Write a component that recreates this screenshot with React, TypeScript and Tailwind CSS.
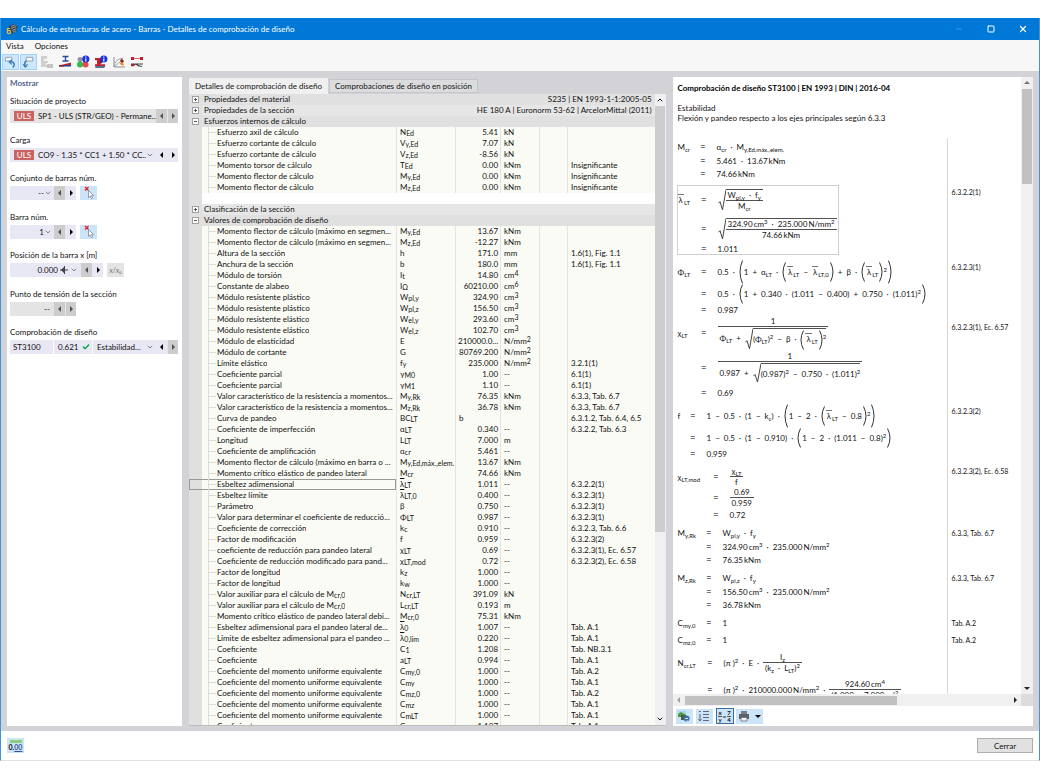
import React from 'react';
import { ChevronDown, ChevronUp, Check, X, Minus, Square } from 'lucide-react';

/* ---------- shared text helpers ---------- */

/** Renders "M|y,Ed" as M with subscript, "cm^4" as superscript; a leading "~" draws a bar over the letter. */
function Sym({ t }: { t: string }) {
  const bar = t.startsWith('~');
  const clean = bar ? t.slice(1) : t;
  const [base, sub] = clean.split('|');
  const [main, sup] = base.split('^');
  return (
    <span className="whitespace-nowrap">
      <span className={bar ? 'overline' : ''}>{main}</span>
      {sup && <span className="relative -top-0.5 text-[7px] leading-none">{sup}</span>}
      {sub && <span className="relative top-px text-[7px] leading-none">{sub}</span>}
    </span>
  );
}

function Triangle({ dir, className = '' }: { dir: 'l' | 'r' | 'd' | 'u'; className?: string }) {
  const d = {
    l: 'M5 1 L2 4 L5 7 Z',
    r: 'M3 1 L6 4 L3 7 Z',
    d: 'M1 3 L7 3 L4 6 Z',
    u: 'M1 5 L7 5 L4 2 Z',
  }[dir];
  return (
    <svg viewBox="0 0 8 8" className={`h-2 w-2 shrink-0 ${className}`} fill="currentColor">
      <path d={d} />
    </svg>
  );
}

/* ---------- toolbar icons ---------- */

const ToolIcons = [
  <svg key="a" viewBox="0 0 16 14" className="h-3.5 w-4" fill="none">
    <path d="M2.500 2h7v4h-7z" fill="#f4f6f8" stroke="#98a0a8" />
    <path d="M7 7q4-1 5 2 0 2-1.500 4" stroke="#3d78b4" strokeWidth="1.600" />
    <path d="M9.500 4.500L6.500 7l3 2.500" stroke="#3d78b4" strokeWidth="1.200" />
  </svg>,
  <svg key="b" viewBox="0 0 16 14" className="h-3.5 w-4" fill="none">
    <path d="M5.500 2h7v4h-7z" fill="#f4f6f8" stroke="#98a0a8" />
    <path d="M6 6Q3 7 4.500 12" stroke="#3d78b4" strokeWidth="1.600" />
    <path d="M2 9.500L4.800 12.500 7 9.500" stroke="#3d78b4" strokeWidth="1.200" />
  </svg>,
  <svg key="c" viewBox="0 0 16 14" className="h-3.5 w-4" fill="#d0d0d0">
    <path d="M2 1h6v3H5v2h4v2H7v2h2v2H2z" />
    <path d="M8 9h6v4H8z" fill="#c4c4c4" />
  </svg>,
  <svg key="d" viewBox="0 0 16 14" className="h-3.5 w-4">
    <path d="M5.500 1.500h6M5.500 6h6M8.500 1v5" stroke="#2b4a9a" strokeWidth="1.400" />
    <path d="M2 10.500L14 7.500v3z" fill="#c9252c" />
    <path d="M2 10h12v1.500H2z" fill="#26408b" />
    <path d="M2 10h5v1.500H2z" fill="#8c1d2a" />
  </svg>,
  <svg key="e" viewBox="0 0 16 14" className="h-3.5 w-4">
    <circle cx="5" cy="4.500" r="2.500" fill="#8b94a6" />
    <circle cx="5" cy="9.500" r="3" fill="#2fbf45" />
    <circle cx="10.500" cy="9.500" r="3" fill="#ea4a4a" />
    <circle cx="10.800" cy="4" r="3.600" fill="#1a2fe0" />
    <path d="M10.800 1.500v1.200M10.800 3.600v3" stroke="#fff" strokeWidth="1.200" />
  </svg>,
  <svg key="f" viewBox="0 0 16 14" className="h-3.5 w-4">
    <path d="M2 3h7v2.200H7v4h5v2.300H2V9.200h2v-4H2z" fill="#c2232b" />
    <path d="M3 11h9.500l-1.500 2H2z" fill="#5a6f96" />
    <path d="M7 5v4l2-1V5z" fill="#7d1722" />
    <circle cx="10.800" cy="4" r="3.600" fill="#1a2fe0" />
    <path d="M10.800 1.500v1.200M10.800 3.600v3" stroke="#fff" strokeWidth="1.200" />
  </svg>,
  <svg key="g" viewBox="0 0 16 14" className="h-3.5 w-4" fill="none">
    <path d="M3 2v10h11" stroke="#8f8f8f" />
    <path d="M3 12Q4 4 12 3M3 12L11 5" stroke="#a3a3a3" />
    <path d="M9 5.500l2-2 2 3-2 2.500z" fill="#8a2f1c" />
    <path d="M8.500 8l3-1 1.500 3-2.500.5z" fill="#e88a2c" />
  </svg>,
  <svg key="h" viewBox="0 0 16 14" className="h-3.5 w-4" fill="none">
    <path d="M3 3.500h10" stroke="#e06a6a" />
    <path d="M2 2h3v3H2zM11 2h3v3h-3z" fill="#c01f2c" />
    <path d="M2 9h5q-2 3.500-5 2z" fill="#c01f2c" />
    <path d="M2 9h12M7 9q3 3 6 2" stroke="#444" strokeWidth="1.200" />
  </svg>,
];
const toolNames = [
  'Deshacer posición',
  'Rehacer posición',
  'Vista previa',
  'Sección',
  'Información',
  'Información de sección',
  'Diagrama',
  'Resultados en barra',
];

/* ---------- left panel ---------- */

const Field = ({ label, id, children }: { label: string; id: string; children: React.ReactNode }) => (
  <div className="flex flex-col gap-0.5">
    <label htmlFor={id} className="h-3 leading-3">
      {label}
    </label>
    <div className="flex h-[14px] items-stretch">{children}</div>
  </div>
);

function Arrow({ dir, disabled }: { dir: 'l' | 'r'; disabled?: boolean }) {
  return (
    <button
      type="button"
      disabled={disabled}
      aria-label={dir === 'l' ? 'Anterior' : 'Siguiente'}
      className={`flex w-[11px] items-center justify-center ${
        disabled ? 'bg-[#cdcdcd] text-neutral-600' : 'bg-[#e8e8f4] text-black'
      } ${dir === 'r' && disabled ? 'border-l border-neutral-200' : ''}`}
    >
      <Triangle dir={dir} />
    </button>
  );
}

function Drop({
  id,
  value,
  right,
  plain,
  disabled,
}: {
  id: string;
  value: string;
  right?: boolean;
  plain?: boolean;
  disabled?: boolean;
}) {
  return (
    <span className="relative flex min-w-0 flex-1 items-center">
      <select
        id={id}
        disabled={disabled}
        className={`h-full w-full appearance-none bg-transparent opacity-100 outline-none ${
          plain ? 'pl-1' : 'pr-2.5 pl-1'
        } ${right ? 'text-right' : ''}`}
      >
        <option>{value}</option>
      </select>
      {!plain && (
        <ChevronDown className="pointer-events-none absolute right-0.5 h-2 w-2 text-neutral-600" strokeWidth={2} />
      )}
    </span>
  );
}

const Uls = () => (
  <span className="my-0.5 ml-1 flex w-5 shrink-0 items-center justify-center bg-[#c96464] text-white">ULS</span>
);

const PickButton = () => (
  <button type="button" aria-label="Seleccionar" className="ml-1 flex w-[17px] items-center justify-center bg-[#cce4f7]">
    <svg viewBox="0 0 14 14" className="h-[14px] w-[14px]" fill="none">
      <path d="M3 1l3.500 3.500M6.500 1L3 4.500" stroke="#e0202c" strokeWidth="1.300" />
      <path d="M6.500 4.500v7l1.700-1.500 1.300 2.500 1.200-.6-1.200-2.400h2z" fill="#fff" stroke="#7d8790" strokeWidth=".8" />
    </svg>
  </button>
);

function LeftPanel() {
  return (
    <aside className="w-[175px] shrink-0 bg-white pl-[3px]">
      <h2 className="h-3 leading-3 font-bold text-[#52648f]">Mostrar</h2>
      <div className="grid h-[265px] content-between pt-1.5">
        <Field label="Situación de proyecto" id="sp">
          <div className="flex w-[146px] bg-[#e4e4e4]">
            <Uls />
            <Drop id="sp" value="SP1 - ULS (STR/GEO) - Permane..." plain disabled />
          </div>
          <Arrow dir="l" disabled />
          <Arrow dir="r" disabled />
        </Field>
        <Field label="Carga" id="carga">
          <div className="flex w-[146px] bg-[#e8e8f4]">
            <Uls />
            <Drop id="carga" value="CO9 - 1.35 * CC1 + 1.50 * CC..." />
          </div>
          <Arrow dir="l" />
          <Arrow dir="r" />
        </Field>
        <Field label="Conjunto de barras núm." id="cb">
          <div className="flex w-11 bg-[#e8e8f4]">
            <Drop id="cb" value="--" right />
          </div>
          <Arrow dir="l" disabled />
          <Arrow dir="r" />
          <PickButton />
        </Field>
        <Field label="Barra núm." id="bn">
          <div className="flex w-11 bg-[#e8e8f4]">
            <Drop id="bn" value="1" right />
          </div>
          <Arrow dir="l" disabled />
          <Arrow dir="r" />
          <PickButton />
        </Field>
        <Field label="Posición de la barra x [m]" id="px">
          <div className="flex w-[71px] items-center bg-[#e8e8f4]">
            <input id="px" defaultValue="0.000" className="h-full w-12 bg-transparent text-right outline-none" />
            <svg viewBox="0 0 8 8" className="ml-0.5 h-2 w-2 text-neutral-700">
              <path d="M0 4h8M4.500 0v8" stroke="currentColor" />
              <path d="M1 4l3-3v6z" fill="currentColor" />
            </svg>
            <ChevronDown className="ml-0.5 h-2 w-2 text-neutral-600" />
          </div>
          <Arrow dir="l" disabled />
          <Arrow dir="r" />
          <button type="button" className="ml-1 flex w-[17px] items-center justify-center bg-[#e4e4e4] text-[7px] text-neutral-500">
            x/x₀
          </button>
        </Field>
        <Field label="Punto de tensión de la sección" id="pt">
          <div className="flex w-11 bg-[#e4e4e4]">
            <input id="pt" disabled defaultValue="--" className="h-full w-full bg-transparent pr-1 text-right" />
          </div>
          <Arrow dir="l" disabled />
          <Arrow dir="r" disabled />
        </Field>
        <Field label="Comprobación de diseño" id="cd">
          <div className="flex w-[146px] items-center bg-[#e8e8f4]">
            <span className="w-[43px] pl-[3px]">ST3100</span>
            <span className="flex h-full w-10 items-center gap-1 border-x border-white pl-1">
              0.621 <Check className="h-2 w-2 text-green-600" strokeWidth={4} />
            </span>
            <Drop id="cd" value="Estabilidad..." />
          </div>
          <Arrow dir="l" />
          <Arrow dir="r" disabled />
        </Field>
      </div>
    </aside>
  );
}

/* ---------- details table ---------- */

type Row = [string, string, string, string, string];

const forces: Row[] = [
  ['Esfuerzo axil de cálculo', 'N|Ed', '5.41', 'kN', ''],
  ['Esfuerzo cortante de cálculo', 'V|y,Ed', '7.07', 'kN', ''],
  ['Esfuerzo cortante de cálculo', 'V|z,Ed', '-8.56', 'kN', ''],
  ['Momento torsor de cálculo', 'T|Ed', '0.00', 'kNm', 'Insignificante'],
  ['Momento flector de cálculo', 'M|y,Ed', '0.00', 'kNm', 'Insignificante'],
  ['Momento flector de cálculo', 'M|z,Ed', '0.00', 'kNm', 'Insignificante'],
];

const values: Row[] = [
  ['Momento flector de cálculo (máximo en segmen...', 'M|y,Ed', '13.67', 'kNm', ''],
  ['Momento flector de cálculo (máximo en segmen...', 'M|z,Ed', '-12.27', 'kNm', ''],
  ['Altura de la sección', 'h', '171.0', 'mm', '1.6(1), Fig. 1.1'],
  ['Anchura de la sección', 'b', '180.0', 'mm', '1.6(1), Fig. 1.1'],
  ['Módulo de torsión', 'I|t', '14.80', 'cm^4', ''],
  ['Constante de alabeo', 'I|Ω', '60210.00', 'cm^6', ''],
  ['Módulo resistente plástico', 'W|pl,y', '324.90', 'cm^3', ''],
  ['Módulo resistente plástico', 'W|pl,z', '156.50', 'cm^3', ''],
  ['Módulo resistente elástico', 'W|el,y', '293.60', 'cm^3', ''],
  ['Módulo resistente elástico', 'W|el,z', '102.70', 'cm^3', ''],
  ['Módulo de elasticidad', 'E', '210000.0...', 'N/mm^2', ''],
  ['Módulo de cortante', 'G', '80769.200', 'N/mm^2', ''],
  ['Límite elástico', 'f|y', '235.000', 'N/mm^2', '3.2.1(1)'],
  ['Coeficiente parcial', 'γ|M0', '1.00', '--', '6.1(1)'],
  ['Coeficiente parcial', 'γ|M1', '1.10', '--', '6.1(1)'],
  ['Valor característico de la resistencia a momentos...', 'M|y,Rk', '76.35', 'kNm', '6.3.3, Tab. 6.7'],
  ['Valor característico de la resistencia a momentos...', 'M|z,Rk', '36.78', 'kNm', '6.3.3, Tab. 6.7'],
  ['Curva de pandeo', 'BC|LT', 'b', '', '6.3.1.2, Tab. 6.4, 6.5'],
  ['Coeficiente de imperfección', 'α|LT', '0.340', '--', '6.3.2.2, Tab. 6.3'],
  ['Longitud', 'L|LT', '7.000', 'm', ''],
  ['Coeficiente de amplificación', 'α|cr', '5.461', '--', ''],
  ['Momento flector de cálculo (máximo en barra o ...', 'M|y,Ed,máx.,elem.', '13.67', 'kNm', ''],
  ['Momento crítico elástico de pandeo lateral', 'M|cr', '74.66', 'kNm', ''],
  ['Esbeltez adimensional', '~λ|LT', '1.011', '--', '6.3.2.2(1)'],
  ['Esbeltez límite', '~λ|LT,0', '0.400', '--', '6.3.2.3(1)'],
  ['Parámetro', 'β', '0.750', '--', '6.3.2.3(1)'],
  ['Valor para determinar el coeficiente de reducció...', 'Φ|LT', '0.987', '--', '6.3.2.3(1)'],
  ['Coeficiente de corrección', 'k|c', '0.910', '--', '6.3.2.3, Tab. 6.6'],
  ['Factor de modificación', 'f', '0.959', '--', '6.3.2.3(2)'],
  ['coeficiente de reducción para pandeo lateral', 'χ|LT', '0.69', '--', '6.3.2.3(1), Ec. 6.57'],
  ['Coeficiente de reducción modificado para pand...', 'χ|LT,mod', '0.72', '--', '6.3.2.3(2), Ec. 6.58'],
  ['Factor de longitud', 'k|z', '1.000', '--', ''],
  ['Factor de longitud', 'k|w', '1.000', '--', ''],
  ['Valor auxiliar para el cálculo de M|cr,0', 'N|cr,LT', '391.09', 'kN', ''],
  ['Valor auxiliar para el cálculo de M|cr,0', 'L|cr,LT', '0.193', 'm', ''],
  ['Momento crítico elástico de pandeo lateral debi...', 'M|cr,0', '75.31', 'kNm', ''],
  ['Esbeltez adimensional para el pandeo lateral de...', '~λ|0', '1.007', '--', 'Tab. A.1'],
  ['Límite de esbeltez adimensional para el pandeo ...', '~λ|0,lim', '0.220', '--', 'Tab. A.1'],
  ['Coeficiente', 'C|1', '1.208', '--', 'Tab. NB.3.1'],
  ['Coeficiente', 'a|LT', '0.994', '--', 'Tab. A.1'],
  ['Coeficiente del momento uniforme equivalente', 'C|my,0', '1.000', '--', 'Tab. A.2'],
  ['Coeficiente del momento uniforme equivalente', 'C|my', '1.000', '--', 'Tab. A.1'],
  ['Coeficiente del momento uniforme equivalente', 'C|mz,0', '1.000', '--', 'Tab. A.2'],
  ['Coeficiente del momento uniforme equivalente', 'C|mz', '1.000', '--', 'Tab. A.1'],
  ['Coeficiente del momento uniforme equivalente', 'C|mLT', '1.000', '--', 'Tab. A.1'],
  ['Coeficiente', 'C|yy', '1.107', '--', 'Tab. A.1'],
];

function GroupRow({ title, note, open, shade }: { title: string; note?: string; open?: boolean; shade?: boolean }) {
  return (
    <tr className={`h-[11px] ${shade ? 'bg-[#e0e0e0]' : 'bg-[#e6e6e6]'}`}>
      <td className="bg-[#e0e0e0] p-0">
        <button
          type="button"
          aria-label={title}
          className="ml-[3px] flex h-[7px] w-[7px] items-center justify-center border border-neutral-400 bg-white"
        >
          <svg viewBox="0 0 5 5" className="h-[5px] w-[5px]" stroke="#555" strokeWidth="1">
            <path d={open ? 'M1 2.5h3' : 'M1 2.5h3M2.5 1v3'} />
          </svg>
        </button>
      </td>
      <td colSpan={note ? 1 : 6} className="truncate p-0 pl-0.5">
        {title}
      </td>
      {note && (
        <td colSpan={5} className="p-0 pr-[3px] text-right whitespace-nowrap">
          {note}
        </td>
      )}
    </tr>
  );
}

function DataRow({ row }: { row: Row }) {
  const [desc, sym, val, unit, ref] = row;
  const selected = desc === 'Esbeltez adimensional';
  const cell = 'border-l border-[#e4e4e4] p-0';
  return (
    <tr className="h-[11px] bg-[#fafbf5]">
      <td
        className={`bg-[#e0e0e0] p-0 ${
          selected ? 'shadow-[inset_1px_0_#999,inset_0_1px_#999,inset_0_-1px_#999]' : ''
        }`}
      />
      <td className={`p-0 ${selected ? 'shadow-[inset_-1px_0_#999,inset_0_1px_#999,inset_0_-1px_#999]' : ''}`}>
        <div className="flex h-[11px] items-center">
          <span className="ml-1.5 h-[11px] w-px shrink-0 bg-[#dcdcdc]" />
          <span className="mr-px h-px w-[7px] shrink-0 bg-[#dcdcdc]" />
          <span className="truncate leading-[11px]">
            <Sym t={desc} />
          </span>
        </div>
      </td>
      <td className={`${cell} pl-[3px]`}>
        <Sym t={sym} />
      </td>
      <td className={`${cell} ${val === 'b' ? 'pl-[3px] text-left' : 'pr-0.5 text-right'}`}>{val}</td>
      <td className={`${cell} pl-[3px]`}>
        <Sym t={unit} />
      </td>
      <td className={cell} />
      <td className={`${cell} pl-[3px] whitespace-nowrap`}>{ref}</td>
    </tr>
  );
}

function DetailsPanel() {
  return (
    <section className="flex min-w-0 flex-[476] flex-col">
      <div role="tablist" className="flex h-[17px] items-end">
        <button type="button" role="tab" aria-selected="true" className="h-4 bg-[#f0f0f0] px-1.5 leading-4">
          Detalles de comprobación de diseño
        </button>
        <button
          type="button"
          role="tab"
          aria-selected="false"
          className="mb-px ml-px h-[14px] border border-[#c6c6ca] bg-[#dcdcde] px-[5px] leading-3"
        >
          Comprobaciones de diseño en posición
        </button>
      </div>
      <div className="flex min-h-0 flex-1 border-b border-[#bdbdbd]">
        <div className="min-w-0 flex-1 overflow-hidden bg-white">
          <table className="w-full table-fixed border-collapse leading-[11px]">
            <colgroup>
              <col className="w-[13px]" />
              <col />
              <col className="w-[59px]" />
              <col className="w-[45px]" />
              <col className="w-[39px]" />
              <col className="w-[28px]" />
              <col className="w-[87px]" />
            </colgroup>
            <tbody>
              <GroupRow title="Propiedades del material" note="S235 | EN 1993-1-1:2005-05" shade />
              <GroupRow title="Propiedades de la sección" note="HE 180 A | Euronorm 53-62 | ArcelorMittal (2011)" />
              <GroupRow title="Esfuerzos internos de cálculo" open shade />
              {forces.map((r, i) => (
                <DataRow key={i} row={r} />
              ))}
              <tr className="h-[11px]">
                <td className="bg-[#e0e0e0] p-0" />
                <td colSpan={6} className="p-0" />
              </tr>
              <GroupRow title="Clasificación de la sección" />
              <GroupRow title="Valores de comprobación de diseño" open shade />
              {values.map((r, i) => (
                <DataRow key={i} row={r} />
              ))}
            </tbody>
          </table>
        </div>
        <div className="flex w-[11px] shrink-0 flex-col items-center bg-[#f0f0f0]">
          <ChevronUp className="my-0.5 h-2 w-2 shrink-0" strokeWidth={3} />
          <div className="w-[10px] flex-[427] bg-[#cdcdcd]" />
          <div className="flex-[181]" />
          <ChevronDown className="my-0.5 h-2 w-2 shrink-0" strokeWidth={3} />
        </div>
      </div>
    </section>
  );
}

/* ---------- formulas ---------- */

const Sub = ({ children }: { children: React.ReactNode }) => (
  <span className="relative top-0.5 text-[6px]">{children}</span>
);
const Sup = ({ children }: { children: React.ReactNode }) => (
  <span className="relative -top-[3px] text-[6px]">{children}</span>
);
const Dot = () => <span className="px-1">·</span>;
const Op = ({ c }: { c: string }) => <span className="px-1">{c}</span>;

const Lam = ({ s = 'LT' }: { s?: string }) => (
  <span>
    <span className="border-t border-neutral-500 px-px">λ</span>
    <Sub>{s}</Sub>
  </span>
);

function Frac({ top, bottom }: { top: React.ReactNode; bottom: React.ReactNode }) {
  return (
    <span className="inline-flex flex-col items-center">
      <span className="flex items-center px-0.5 leading-[9px]">{top}</span>
      <span className="h-px w-full bg-neutral-600" />
      <span className="flex items-center px-0.5 pt-px leading-[9px]">{bottom}</span>
    </span>
  );
}

function Root({ children }: { children: React.ReactNode }) {
  return (
    <span className="inline-flex items-stretch">
      <svg viewBox="0 0 8 20" preserveAspectRatio="none" className="w-2 self-stretch" fill="none" stroke="#444">
        <path d="M0.500 13 L2 11.500 L4.500 19 L8 0.500" vectorEffect="non-scaling-stroke" />
      </svg>
      <span className="inline-flex items-center border-t border-neutral-600 pt-px">{children}</span>
    </span>
  );
}

function Big({ children }: { children: React.ReactNode }) {
  return (
    <span className="inline-flex items-stretch">
      <svg viewBox="0 0 4 20" preserveAspectRatio="none" className="w-1" fill="none" stroke="#333">
        <path d="M3.500 0.500 Q-1.500 10 3.500 19.500" vectorEffect="non-scaling-stroke" />
      </svg>
      <span className="inline-flex items-center px-px py-0.5">{children}</span>
      <svg viewBox="0 0 4 20" preserveAspectRatio="none" className="w-1" fill="none" stroke="#333">
        <path d="M0.500 0.500 Q5.500 10 0.500 19.500" vectorEffect="non-scaling-stroke" />
      </svg>
    </span>
  );
}

/** A number and its unit, set with a narrow gap. */
const Qty = ({ n, u, p }: { n: string; u: string; p?: string }) => (
  <span>
    {n}
    <span className="pl-px">{u}</span>
    {p && <Sup>{p}</Sup>}
  </span>
);

interface EqLine {
  h: string;
  body: React.ReactNode;
}

function Equation({
  lhs,
  lhsWidth,
  lines,
  note,
  notePad = 'pt-0.5',
  className = 'pt-1',
  boxed,
}: {
  lhs: React.ReactNode;
  lhsWidth: string;
  lines: EqLine[];
  note?: string;
  notePad?: string;
  className?: string;
  boxed?: boolean;
}) {
  return (
    <div className={`flex items-start ${className}`}>
      <div className="w-[269px] shrink-0">
        <div className={boxed ? '-mx-px inline-block border border-[#d0d0d0] pr-px' : ''}>
          {lines.map((l, i) => (
            <div key={i} className={`flex items-center whitespace-nowrap ${l.h}`}>
              <span className={`${lhsWidth} shrink-0`}>{i === 0 && lhs}</span>
              <span className="w-4 shrink-0 font-['Noto_Sans'] leading-3 font-bold text-neutral-500">=</span>
              <span className="flex items-center">{l.body}</span>
            </div>
          ))}
        </div>
      </div>
      <span className={`pl-[5px] text-[7px] leading-[10px] ${notePad}`}>{note}</span>
    </div>
  );
}

function Formulas() {
  return (
    <div className="flex flex-col bg-[linear-gradient(#d8d8d8,#d8d8d8)] bg-[length:1px_100%] bg-[position:269px_0] bg-no-repeat">
      <Equation
        className="pt-0.5"
        lhs={<>M<Sub>cr</Sub></>}
        lhsWidth="w-[23px]"
        lines={[
          { h: 'h-[14px]', body: <><span>α<Sub>cr</Sub></span><Dot /><span>M<Sub>y,Ed,máx.,elem.</Sub></span></> },
          { h: 'h-[13px]', body: <>5.461<Dot /><Qty n="13.67" u="kNm" /></> },
          { h: 'h-[14px]', body: <Qty n="74.66" u="kNm" /> },
        ]}
      />
      <Equation
        boxed
        lhs={<Lam />}
        lhsWidth="w-6"
        note="6.3.2.2(1)"
        lines={[
          {
            h: 'h-7',
            body: (
              <Root>
                <Frac top={<><span>W<Sub>pl,y</Sub></span><Dot /><span>f<Sub>y</Sub></span></>} bottom={<span>M<Sub>cr</Sub></span>} />
              </Root>
            ),
          },
          {
            h: 'h-[30px]',
            body: (
              <Root>
                <Frac
                  top={<><Qty n="324.90" u="cm" p="3" /><Dot /><Qty n="235.000" u="N/mm" p="2" /></>}
                  bottom={<Qty n="74.66" u="kNm" />}
                />
              </Root>
            ),
          },
          { h: 'h-[10px]', body: '1.011' },
        ]}
      />
      <Equation
        className="pt-[5px]"
        lhs={<>Φ<Sub>LT</Sub></>}
        lhsWidth="w-6"
        note="6.3.2.3(1)"
        lines={[
          {
            h: 'h-6',
            body: (
              <>
                0.5<Dot />
                <Big>
                  1<Op c="+" /><span>α<Sub>LT</Sub></span><Dot />
                  <Big><Lam /><Op c="−" /><Lam s="LT,0" /></Big>
                  <Op c="+" />β<Dot />
                  <Big><Lam /></Big><Sup>2</Sup>
                </Big>
              </>
            ),
          },
          {
            h: 'h-5',
            body: (
              <>
                0.5<Dot />
                <Big>
                  1<Op c="+" />0.340<Dot />(1.011<Op c="−" />0.400)<Op c="+" />0.750<Dot />(1.011)<Sup>2</Sup>
                </Big>
              </>
            ),
          },
          { h: 'h-3', body: '0.987' },
        ]}
      />
      <Equation
        className="pt-0"
        lhs={<>χ<Sub>LT</Sub></>}
        lhsWidth="w-6"
        note="6.3.2.3(1), Ec. 6.57"
        notePad="pt-1.5"
        lines={[
          {
            h: 'h-[34px]',
            body: (
              <Frac
                top="1"
                bottom={
                  <>
                    <span>Φ<Sub>LT</Sub></span><Op c="+" />
                    <Root>
                      <span>(Φ<Sub>LT</Sub>)</span><Sup>2</Sup><Op c="−" />β<Dot /><Big><Lam /></Big><Sup>2</Sup>
                    </Root>
                  </>
                }
              />
            ),
          },
          {
            h: 'h-[35px]',
            body: (
              <Frac
                top="1"
                bottom={
                  <>
                    0.987<Op c="+" />
                    <Root>
                      (0.987)<Sup>2</Sup><Op c="−" />0.750<Dot />(1.011)<Sup>2</Sup>
                    </Root>
                  </>
                }
              />
            ),
          },
          { h: 'h-4', body: '0.69' },
        ]}
      />
      <Equation
        className="pt-[3px]"
        lhs="f"
        lhsWidth="w-[13px]"
        note="6.3.2.3(2)"
        lines={[
          {
            h: 'h-6',
            body: (
              <>
                1<Op c="−" />0.5<Dot />(1<Op c="−" /><span>k<Sub>c</Sub></span>)<Dot />
                <Big>1<Op c="−" />2<Dot /><Big><Lam /><Op c="−" />0.8</Big><Sup>2</Sup></Big>
              </>
            ),
          },
          {
            h: 'h-5',
            body: (
              <>
                1<Op c="−" />0.5<Dot />(1<Op c="−" />0.910)<Dot />
                <Big>1<Op c="−" />2<Dot />(1.011<Op c="−" />0.8)<Sup>2</Sup></Big>
              </>
            ),
          },
          { h: 'h-3', body: '0.959' },
        ]}
      />
      <Equation
        className="pt-1.5"
        lhs={<>χ<Sub>LT,mod</Sub></>}
        lhsWidth="w-9"
        note="6.3.2.3(2), Ec. 6.58"
        notePad="pt-0"
        lines={[
          { h: 'h-[22px]', body: <Frac top={<span>χ<Sub>LT</Sub></span>} bottom="f" /> },
          { h: 'h-5', body: <Frac top="0.69" bottom="0.959" /> },
          { h: 'h-[14px]', body: '0.72' },
        ]}
      />
      <Equation
        lhs={<>M<Sub>y,Rk</Sub></>}
        lhsWidth="w-[29px]"
        note="6.3.3, Tab. 6.7"
        lines={[
          { h: 'h-[14px]', body: <><span>W<Sub>pl,y</Sub></span><Dot /><span>f<Sub>y</Sub></span></> },
          { h: 'h-[13px]', body: <><Qty n="324.90" u="cm" p="3" /><Dot /><Qty n="235.000" u="N/mm" p="2" /></> },
          { h: 'h-[14px]', body: <Qty n="76.35" u="kNm" /> },
        ]}
      />
      <Equation
        lhs={<>M<Sub>z,Rk</Sub></>}
        lhsWidth="w-[29px]"
        note="6.3.3, Tab. 6.7"
        lines={[
          { h: 'h-[14px]', body: <><span>W<Sub>pl,z</Sub></span><Dot /><span>f<Sub>y</Sub></span></> },
          { h: 'h-[13px]', body: <><Qty n="156.50" u="cm" p="3" /><Dot /><Qty n="235.000" u="N/mm" p="2" /></> },
          { h: 'h-[14px]', body: <Qty n="36.78" u="kNm" /> },
        ]}
      />
      <Equation lhs={<>C<Sub>my,0</Sub></>} lhsWidth="w-[29px]" note="Tab. A.2" lines={[{ h: 'h-[13px]', body: '1' }]} />
      <Equation lhs={<>C<Sub>mz,0</Sub></>} lhsWidth="w-[29px]" note="Tab. A.2" lines={[{ h: 'h-[14px]', body: '1' }]} />
      <Equation
        lhs={<>N<Sub>cr,LT</Sub></>}
        lhsWidth="w-[30px]"
        lines={[
          {
            h: 'h-6',
            body: (
              <>
                (π )<Sup>2</Sup><Dot />E<Dot />
                <Frac top={<span>I<Sub>z</Sub></span>} bottom={<>(<span>k<Sub>z</Sub></span><Dot /><span>L<Sub>LT</Sub></span>)<Sup>2</Sup></>} />
              </>
            ),
          },
          {
            h: 'h-[30px]',
            body: (
              <>
                (π )<Sup>2</Sup><Dot /><Qty n="210000.000" u="N/mm" p="2" /><Dot />
                <Frac top={<Qty n="924.60" u="cm" p="4" />} bottom={<>(1.000<Dot />7.000 m)<Sup>2</Sup></>} />
              </>
            ),
          },
        ]}
      />
    </div>
  );
}

function FormulaPanel() {
  const tool = 'flex h-[15px] w-[17px] items-center justify-center bg-[#cce4f7]';
  return (
    <section className="flex min-w-0 flex-[360] flex-col bg-white">
      <div className="flex min-h-0 flex-1">
        <div className="min-w-0 flex-1 overflow-hidden pl-[5px]">
          <h2 className="h-4 pt-1 leading-[14px] font-bold text-black">
            Comprobación de diseño ST3100 | EN 1993 | DIN | 2016-04
          </h2>
          <p className="mt-[10px] mb-[15px] leading-[10px]">
            Estabilidad
            <br />
            Flexión y pandeo respecto a los ejes principales según 6.3.3
          </p>
          <Formulas />
        </div>
        <div className="flex w-[12px] shrink-0 flex-col items-center bg-[#f0f0f0]">
          <Triangle dir="u" className="my-0.5 text-neutral-500" />
          <div className="w-[10px] flex-[95] bg-[#c1c1c1]" />
          <div className="flex-[498]" />
          <Triangle dir="d" className="my-0.5 text-neutral-800" />
        </div>
      </div>
      <div className="flex h-3 shrink-0 items-center bg-[#f0f0f0]">
        <Triangle dir="l" className="mx-0.5 text-neutral-400" />
        <div className="h-[9px] flex-[211] bg-[#c1c1c1]" />
        <div className="flex-[114]" />
        <Triangle dir="r" className="mr-0.5 text-neutral-800" />
        <div className="h-full w-[12px] bg-[#dcdcdc]" />
      </div>
      <div className="flex h-5 shrink-0 items-center gap-[2px] pl-[3px]">
        <button type="button" aria-label="Exportar imagen" className={tool}>
          <svg viewBox="0 0 14 13" className="h-[13px] w-[14px]">
            <path d="M1 1h8v6H1z" fill="#a9d2ee" />
            <path d="M1 4l3-2 5 3v2H1z" fill="#4d9a3c" />
            <path d="M4 5h5v5H4z" fill="#4d5a4a" />
            <circle cx="9.500" cy="8.500" r="3" fill="#3a6ea8" />
            <path d="M8 8.500h3M9.500 10.500l2.500 1.500" stroke="#dfe9f4" />
          </svg>
        </button>
        <button type="button" aria-label="Lista" className={`${tool} mx-px`}>
          <svg viewBox="0 0 14 13" className="h-[13px] w-[14px]" fill="none" stroke="#667">
            <path d="M6 1.500h6M6 4.500h6M6 7.500h6M6 10.500h6M2 1.500h2" />
            <path d="M3 4v7M1.500 9L3 11l1.500-2" />
          </svg>
        </button>
        <button
          type="button"
          aria-label="Mostrar fórmulas con valores"
          aria-pressed="true"
          className="flex h-4 w-[18px] items-center justify-center gap-px border border-[#3a6fa5] bg-[#cce4f7] text-[6px] font-bold"
        >
          <span className="flex flex-col leading-[6px]">
            <span className="border-b border-neutral-600">x</span>y
          </span>
          =
          <span className="flex flex-col leading-[6px]">
            <span className="border-b border-neutral-600">7</span>4
          </span>
        </button>
        <button type="button" aria-label="Imprimir" className="flex h-[15px] w-[27px] items-center gap-1 bg-[#cce4f7] pl-0.5">
          <svg viewBox="0 0 12 12" className="h-3 w-3">
            <path d="M3 1h6v3H3z" fill="#7a7f86" />
            <path d="M1 4h10v5H1z" fill="#5b6066" />
            <path d="M3 7.500h6v3.500H3z" fill="#f0f0f0" stroke="#6a6f76" strokeWidth=".8" />
          </svg>
          <Triangle dir="d" className="text-black" />
        </button>
      </div>
    </section>
  );
}

/* ---------- window ---------- */

export default function App() {
  return (
    <div className="flex h-screen flex-col bg-white pt-[18px] pb-[19px] font-['Lato','Noto_Sans',sans-serif] text-[8px] text-[#111]">
      <div className="flex min-h-0 flex-1 flex-col border-r border-b border-l border-r-[#4a90d0] border-b-[#e2e2e2] border-l-[#3a96dd]">
        <header className="flex h-[22px] shrink-0 items-center bg-[#0078d7] pl-[5px] text-white">
          <svg viewBox="0 0 12 12" className="mr-[3px] h-3 w-3">
            <path d="M3 3l5-2 3.500 3-1 4-4 2.500L3 8z" fill="#3b3f47" />
            <path d="M5 3.500l4-1.500M5 5.500l5-2M6 7.500l4.500-2M7 9l3-1.500" stroke="#a8b1bd" strokeWidth=".8" />
            <path d="M1 5.500h3M1.500 5.500v4" stroke="#e6b93a" strokeWidth="1.200" />
            <circle cx="3" cy="9" r="1.700" fill="none" stroke="#e6b93a" strokeWidth="1.200" />
          </svg>
          <h1 className="flex-1">Cálculo de estructuras de acero - Barras - Detalles de comprobación de diseño</h1>
          <div className="flex">
            <button type="button" aria-label="Minimizar" className="flex w-8 items-center justify-center text-[#5aa5e4]">
              <Minus className="h-2 w-2" />
            </button>
            <button type="button" aria-label="Maximizar" className="flex w-8 items-center justify-center">
              <Square className="h-2 w-2" strokeWidth={3} />
            </button>
            <button type="button" aria-label="Cerrar ventana" className="flex w-8 items-center justify-center">
              <X className="h-[10px] w-[10px]" strokeWidth={3} />
            </button>
          </div>
        </header>
        <nav className="flex h-3 shrink-0 items-center gap-[11px] bg-[#f7f7f7] pl-[5px]">
          <button type="button">Vista</button>
          <button type="button">Opciones</button>
        </nav>
        <div className="flex h-[19px] shrink-0 items-center bg-[#f7f7f7] pl-px">
          {ToolIcons.map((icon, i) => (
            <button
              key={i}
              type="button"
              aria-label={toolNames[i]}
              className={`flex h-4 items-center justify-center ${
                i < 2 ? 'mr-px w-[17px] border border-[#a5d3f5] bg-[#cce8ff]' : 'w-[18px]'
              }`}
            >
              {icon}
            </button>
          ))}
        </div>
        <main className="flex min-h-0 flex-1 gap-[7px] bg-[#d2d2d7] px-[6px] pt-[6px] pb-[5px]">
          <LeftPanel />
          <DetailsPanel />
          <FormulaPanel />
        </main>
        <footer className="flex h-[29px] shrink-0 items-center justify-between px-[6px]">
          <button
            type="button"
            aria-label="Unidades y decimales"
            className="flex h-[15px] w-[17px] flex-col items-center justify-center bg-[#cce4f7] leading-[8px]"
          >
            <span className="h-[3px] w-3 bg-[#8ccf7c]" />
            <span className="text-[7px] font-bold">
              0.<span className="text-[#3a55a0] underline">00</span>
            </span>
          </button>
          <button type="button" className="h-[15px] w-14 border border-[#adadad] bg-[#e1e1e1]">
            Cerrar
          </button>
        </footer>
      </div>
    </div>
  );
}
